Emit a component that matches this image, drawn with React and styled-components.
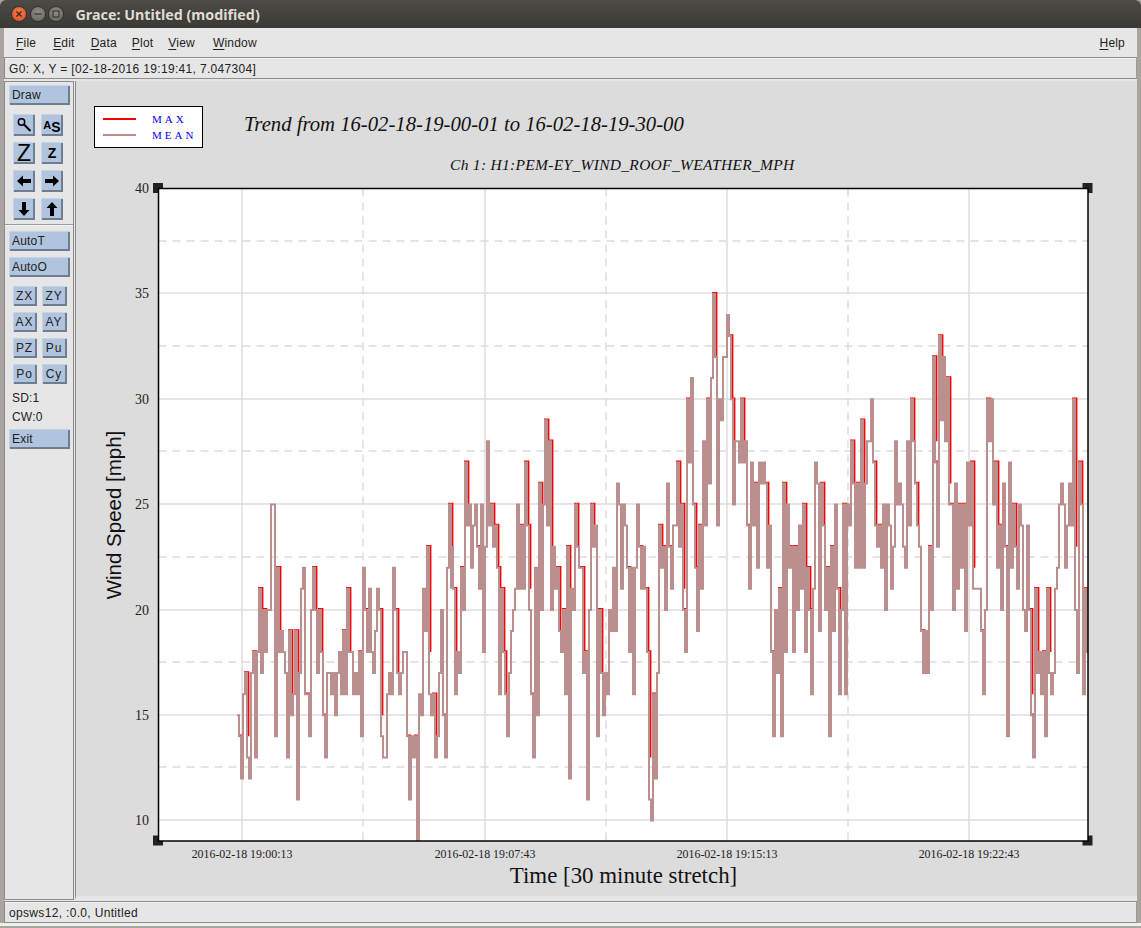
import styled, { createGlobalStyle } from 'styled-components';

const GlobalStyle = createGlobalStyle`
  html, body {
    margin: 0;
    padding: 0;
    background: #a8a59f;
    overflow: hidden;
  }
  * {
    box-sizing: border-box;
  }
`;

const Window = styled.div`
  width: 1141px;
  height: 928px;
  display: flex;
  flex-direction: column;
  background: #a8a59f;
  font-family: 'Liberation Sans', Arial, sans-serif;
  font-size: 12px;
  color: #222;
`;

const TitleBar = styled.div`
  height: 28px;
  flex: none;
  display: flex;
  align-items: center;
  padding-left: 11px;
  background: linear-gradient(#4c4b46, #3a3935);
  border-radius: 6px 6px 0 0;
`;

const WinButton = styled.div`
  width: 16px;
  height: 16px;
  border-radius: 50%;
  margin-right: 2.5px;
  display: flex;
  align-items: center;
  justify-content: center;
  border: 1px solid #33322e;
  background: ${(props) => (props.close ? 'radial-gradient(circle at 50% 40%, #f4805a, #d9481c)' : 'radial-gradient(circle at 50% 35%, #8d8b84, #66645e)')};
`;

const TitleText = styled.div`
  margin-left: 9px;
  font-family: 'Noto Sans', sans-serif;
  font-weight: 700;
  font-size: 14.3px;
  color: #dfdbd2;
`;

const Frame = styled.div`
  flex: 1;
  display: flex;
  flex-direction: column;
  margin: 0 4px;
  min-height: 0;
  background: #e6e6e6;
`;

const MenuBar = styled.div`
  height: 29px;
  flex: none;
  display: flex;
  align-items: center;
  padding-left: 12px;
  padding-right: 12px;
`;

const MenuItem = styled.div`
  margin-right: ${(props) => props.gap}px;
  margin-left: ${(props) => (props.right ? 'auto' : '0')};
  letter-spacing: 0.2px;
  u {
    text-underline-offset: 2px;
  }
`;

const Field = styled.div`
  height: ${(props) => props.height}px;
  flex: none;
  display: flex;
  align-items: center;
  padding: 1px 0 0 4px;
  letter-spacing: 0.33px;
  border: 1px solid #8c8c8c;
  border-right-color: #9a9a9a;
  box-shadow: inset 0 1px 0 #f4f4f4;
`;

const Body = styled.div`
  flex: 1;
  min-height: 0;
  display: flex;
  padding: 2px 0 1px;
`;

const Side = styled.div`
  width: 70px;
  flex: none;
  border: 1px solid #8c8c8c;
  padding: 3px 2px 0 4px;
  display: flex;
  flex-direction: column;
`;

const WideButton = styled.div`
  width: 61px;
  height: 20px;
  flex: none;
  display: flex;
  align-items: center;
  padding-left: 3px;
  margin-top: ${(props) => props.top ?? 0}px;
  margin-bottom: ${(props) => props.bottom ?? 6}px;
  background: #b0c4de;
  box-shadow: inset 1px 1px 0 #c4d3e6, inset -2px -2px 0 #6e7d90;
  letter-spacing: 0.2px;
`;

const IconGrid = styled.div`
  display: grid;
  grid-template-columns: 22px 22px;
  grid-auto-rows: 22px;
  gap: 6px;
  padding: 9px 0 0 4px;
`;

const IconButton = styled.div`
  display: flex;
  align-items: center;
  justify-content: center;
  background: #b0c4de;
  box-shadow: inset 1px 1px 0 #c4d3e6, inset -2px -2px 0 #6e7d90;
  color: #000;
  font-weight: ${(props) => (props.thin ? 400 : 700)};
  font-size: ${(props) => props.size ?? 12}px;
  line-height: 1;
`;

const TallLetter = styled.span`
  font-size: 14px;
  margin-top: 3px;
`;

const Divider = styled.div`
  height: 2px;
  margin: 4px -2px 5px -4px;
  background: #9a9a9a;
  border-bottom: 1px solid #f4f4f4;
`;

const SmallGrid = styled.div`
  display: grid;
  grid-template-columns: 24px 25px;
  grid-auto-rows: 20px;
  column-gap: 5px;
  row-gap: 6px;
  padding: 6px 0 0 4px;
`;

const SmallButton = styled.div`
  display: flex;
  align-items: center;
  justify-content: center;
  padding-right: 1px;
  background: #b0c4de;
  box-shadow: inset 1px 1px 0 #c4d3e6, inset -2px -2px 0 #6e7d90;
  letter-spacing: 0.9px;
`;

const Info = styled.div`
  height: ${(props) => props.height}px;
  margin-top: ${(props) => props.top ?? 0}px;
  display: flex;
  align-items: center;
  padding-left: 3px;
  letter-spacing: 0.2px;
`;

const Canvas = styled.div`
  flex: 1;
  margin-left: 1px;
  min-width: 0;
  border-left: 1px solid #8c8c8c;
  border-bottom: 4px solid #e6e6e6;
  background: #dcdcdc;
`;

const BottomStrip = styled.div`
  height: 5px;
  flex: none;
  margin: 0 -4px;
  background: #f0f0ee;
  border-bottom: 2px solid #a8a59f;
`;

const Plot = styled.svg`
  display: block;
  width: 100%;
  height: 100%;
`;

const X0 = 158.5;
const X1 = 1088;
const Y0 = 188.5;
const Y1 = 841;
const yOf = (v) => 188.5 + (40 - v) * 21.07;

const segs = [
  {
    x: 239,
    v: [14, 12, 16, 17, 13, 12, 17, 18, 13, 18, 21, 17, 20, 18, 20, 20, 25, 25, 14, 22, 18, 19, 18, 17, 13, 19, 15, 16, 19, 11, 17, 21, 22, 16, 16, 14, 20, 22, 20, 17, 20, 18, 15, 13, 17, 17, 16, 17, 15, 17, 18, 16, 19, 16, 21, 18, 18, 16, 17, 16, 18, 14, 22, 20, 18, 21, 18, 17, 19, 21, 20, 14, 13, 13, 16, 17, 16, 22, 20, 17, 16, 17, 18, 18, 14, 11, 14, 13, 14, 9, 16, 15, 21, 19, 23, 16, 15, 16, 13, 14, 17, 20, 15, 13, 22, 25, 21],
  },
  {
    x: 451,
    v: [23, 21, 16, 18, 17, 22, 20, 27, 24, 25, 22, 24, 25, 23, 21, 25, 18, 23, 28, 24, 25, 23, 24, 22, 16, 21, 18, 16, 14, 17, 19, 20, 21, 25, 21, 24, 21, 27, 24, 20, 16, 13, 22, 15, 26, 20, 25, 29, 24, 28, 20, 23, 21, 22, 19, 18, 20, 16, 23, 12, 21, 20, 25, 23, 22, 22, 17, 18, 11, 20, 25, 23, 24, 14, 20, 17, 15, 17, 16, 20, 19, 22, 19, 26, 25, 21, 25, 24, 22, 18, 22, 16, 22, 25, 23, 21, 23, 21, 18, 11, 10, 16, 12, 17, 24, 22, 23, 20],
  },
  {
    x: 667,
    v: [26, 23, 21, 24, 24, 27, 23, 25, 20, 18, 30, 27, 31, 25, 22, 19, 24, 21, 28, 24, 30, 26, 31, 35, 32, 24, 30, 29, 32, 32, 34, 33, 30, 25, 28, 28, 27, 30, 27, 28, 24, 21, 27, 24, 26, 22, 27, 26, 27, 26, 22, 24, 18, 14, 20, 17, 21, 14, 26, 18, 25, 22, 23, 18, 23, 20, 24, 21, 25, 18, 22, 20, 16, 21, 27, 26, 19, 26, 24, 20, 22, 14, 23, 19, 25, 21, 16, 20, 25, 16, 25, 24, 28, 26, 22, 26, 22, 29, 22, 26, 28, 28, 30, 27, 24, 23, 24],
  },
  {
    x: 881,
    v: [22, 25, 20, 25, 24, 21, 23, 28, 25, 26, 25, 23, 22, 28, 24, 30, 28, 26, 24, 23, 19, 17, 19, 17, 23, 20, 32, 27, 23, 33, 29, 32, 28, 31, 25, 25, 20, 26, 21, 25, 22, 25, 19, 27, 24, 27, 21, 21, 21, 21, 19, 16, 20, 30, 28, 30, 25, 27, 22, 24, 20, 26, 23, 14, 27, 22, 25, 23, 21, 25, 24, 20, 19, 24, 20, 15, 13, 21, 17, 18, 16, 18, 14, 21, 17, 16, 17, 21, 22, 25, 26, 25, 22, 24, 26, 24, 30, 20, 17, 27, 25, 16, 21, 18, 23],
  },
];

const points = [{ x: 237, v: 15 }];
segs.forEach((seg) => {
  seg.v.forEach((v, i) => points.push({ x: seg.x + i * 2, v }));
});

const meanPath = points.reduce((d, p, i) => {
  const y = yOf(p.v).toFixed(1);
  if (i === 0) return `M${p.x},${y}`;
  return `${d}H${p.x}V${y}`;
}, '');

// max trace only peeks out on the right of some falling edges
const maxPath = points.reduce((d, p, i) => {
  const next = points[i + 1];
  if (!next || i % 3 === 0 || next.v > p.v - 2) return d;
  const top = yOf(p.v) - 1;
  const bottom = yOf(p.v - Math.ceil((p.v - next.v) * 0.7));
  return `${d}M${p.x - 1},${top.toFixed(1)}H${next.x + 1.6}V${bottom.toFixed(1)}`;
}, '');

const yTicks = [
  { v: 40, y: 188 },
  { v: 35, y: 293 },
  { v: 30, y: 399 },
  { v: 25, y: 504 },
  { v: 20, y: 610 },
  { v: 15, y: 715 },
  { v: 10, y: 820 },
];
const yMinor = [241, 346, 451, 557, 662, 767];
const xMajor = [
  { x: 242, label: '2016-02-18 19:00:13' },
  { x: 485, label: '2016-02-18 19:07:43' },
  { x: 727, label: '2016-02-18 19:15:13' },
  { x: 969, label: '2016-02-18 19:22:43' },
];
const xMinor = [363, 606, 848];
const handles = [
  [X0, Y0],
  [X1, Y0],
  [X0, Y1],
  [X1, Y1],
];

function ArrowIcon({ rotate }) {
  return (
    <svg width="14" height="14" viewBox="0 0 14 14" style={{ transform: `rotate(${rotate}deg)` }}>
      <path d="M0 7L6 1.5V5H14V9H6V12.5Z" fill="#000" />
    </svg>
  );
}

function WinGlyph({ kind }) {
  if (kind === 'close') {
    return (
      <svg width="8" height="8" viewBox="0 0 8 8">
        <path d="M1.5 1.5L6.5 6.5M6.5 1.5L1.5 6.5" stroke="#4a2012" strokeWidth="1.4" />
      </svg>
    );
  }
  if (kind === 'min') {
    return (
      <svg width="8" height="8" viewBox="0 0 8 8">
        <path d="M0.5 4H7.5" stroke="#3c3b37" strokeWidth="1.4" />
      </svg>
    );
  }
  return (
    <svg width="8" height="8" viewBox="0 0 8 8">
      <rect x="1" y="1" width="6" height="6" fill="none" stroke="#3c3b37" strokeWidth="1.2" />
    </svg>
  );
}

function PlotCanvas() {
  return (
    <Plot viewBox="76 81 1061 815" preserveAspectRatio="xMinYMin meet">
      <rect x="94.5" y="106.5" width="108" height="41" fill="#fff" stroke="#000" />
      <line x1="103" x2="136" y1="119" y2="119" stroke="#f00" strokeWidth="2" />
      <line x1="103" x2="136" y1="135" y2="135" stroke="#bc8f8f" strokeWidth="2" />
      <g fontFamily="'Liberation Serif', serif" fontSize="11" fill="#00f" letterSpacing="3">
        <text x="152" y="123">MAX</text>
        <text x="152" y="139">MEAN</text>
      </g>
      <text x="244" y="131" fontFamily="'Liberation Serif', serif" fontStyle="italic" fontSize="20.7" fill="#111">
        Trend from 16-02-18-19-00-01 to 16-02-18-19-30-00
      </text>
      <text x="450" y="170" fontFamily="'Liberation Serif', serif" fontStyle="italic" fontSize="15.5" letterSpacing="0.3" fill="#111">
        Ch 1: H1:PEM-EY_WIND_ROOF_WEATHER_MPH
      </text>

      {handles.map(([x, y]) => (
        <rect key={`${x}-${y}`} x={x - 5.5} y={y - 5.5} width="10" height="10" fill="#222" />
      ))}
      <rect x={X0} y={Y0} width={X1 - X0} height={Y1 - Y0} fill="#fff" />

      <g stroke="#dcdcdc" strokeWidth="1.4">
        {yTicks.slice(1).map((t) => (
          <line key={t.v} x1={X0} x2={X1} y1={t.y} y2={t.y} />
        ))}
        {xMajor.map((t) => (
          <line key={t.x} x1={t.x} x2={t.x} y1={Y0} y2={Y1} />
        ))}
      </g>
      <g stroke="#dcdcdc" strokeWidth="1.4" strokeDasharray="8 6">
        {yMinor.map((y) => (
          <line key={y} x1={X0} x2={X1} y1={y} y2={y} />
        ))}
        {xMinor.map((x) => (
          <line key={x} x1={x} x2={x} y1={Y0} y2={Y1} />
        ))}
      </g>

      <clipPath id="plot-area">
        <rect x={X0} y={Y0} width={X1 - X0} height={Y1 - Y0} />
      </clipPath>
      <g clipPath="url(#plot-area)" fill="none">
        <path d={maxPath} stroke="#f00" strokeWidth="1.6" />
        <path d={meanPath} stroke="#bc8f8f" strokeWidth="2" />
      </g>

      <rect x={X0} y={Y0} width={X1 - X0} height={Y1 - Y0} fill="none" stroke="#000" strokeWidth="1.5" />

      <g fontFamily="'Liberation Serif', serif" fontSize="14" fill="#222" textAnchor="end">
        {yTicks.map((t) => (
          <text key={t.v} x="149" y={t.y + 5}>{t.v}</text>
        ))}
      </g>
      <g fontFamily="'Liberation Serif', serif" fontSize="11.9" fill="#222" textAnchor="middle">
        {xMajor.map((t) => (
          <text key={t.x} x={t.x} y="858">{t.label}</text>
        ))}
      </g>
      <text x="623.5" y="883" textAnchor="middle" fontFamily="'Liberation Serif', serif" fontSize="22.9" fill="#111">
        Time [30 minute stretch]
      </text>
      <text
        transform="translate(121,515) rotate(-90)"
        textAnchor="middle"
        fontFamily="'Liberation Sans', sans-serif"
        fontSize="20.5"
        fill="#111"
      >
        Wind Speed [mph]
      </text>
    </Plot>
  );
}

export default function App() {
  const menus = [
    { label: 'File', gap: 17 },
    { label: 'Edit', gap: 16 },
    { label: 'Data', gap: 15 },
    { label: 'Plot', gap: 15 },
    { label: 'View', gap: 18 },
    { label: 'Window', gap: 0 },
  ];
  const smalls = ['ZX', 'ZY', 'AX', 'AY', 'PZ', 'Pu', 'Po', 'Cy'];

  return (
    <Window>
      <GlobalStyle />
      <TitleBar>
        <WinButton close>
          <WinGlyph kind="close" />
        </WinButton>
        <WinButton>
          <WinGlyph kind="min" />
        </WinButton>
        <WinButton>
          <WinGlyph kind="max" />
        </WinButton>
        <TitleText>Grace: Untitled (modified)</TitleText>
      </TitleBar>
      <Frame>
        <MenuBar>
          {menus.map((m) => (
            <MenuItem key={m.label} gap={m.gap}>
              <u>{m.label[0]}</u>
              {m.label.slice(1)}
            </MenuItem>
          ))}
          <MenuItem right gap={0}>
            <u>H</u>elp
          </MenuItem>
        </MenuBar>
        <Field height={22}>G0: X, Y = [02-18-2016 19:19:41, 7.047304]</Field>
        <Body>
          <Side>
            <WideButton bottom={0}>Draw</WideButton>
            <IconGrid>
              <IconButton>
                <svg width="16" height="16" viewBox="0 0 16 16">
                  <circle cx="5.5" cy="5" r="3.2" fill="none" stroke="#000" strokeWidth="1.5" />
                  <path d="M8 7.5L14.5 14" stroke="#000" strokeWidth="2" />
                </svg>
              </IconButton>
              <IconButton size={11}>
                A<TallLetter>S</TallLetter>
              </IconButton>
              <IconButton size={23} thin>Z</IconButton>
              <IconButton size={14}>Z</IconButton>
              <IconButton>
                <ArrowIcon rotate={0} />
              </IconButton>
              <IconButton>
                <ArrowIcon rotate={180} />
              </IconButton>
              <IconButton>
                <ArrowIcon rotate={270} />
              </IconButton>
              <IconButton>
                <ArrowIcon rotate={90} />
              </IconButton>
            </IconGrid>
            <Divider />
            <WideButton>AutoT</WideButton>
            <WideButton bottom={3}>AutoO</WideButton>
            <SmallGrid>
              {smalls.map((s) => (
                <SmallButton key={s}>{s}</SmallButton>
              ))}
            </SmallGrid>
            <Info height={18} top={5}>SD:1</Info>
            <Info height={19}>CW:0</Info>
            <WideButton top={3}>Exit</WideButton>
          </Side>
          <Canvas>
            <PlotCanvas />
          </Canvas>
        </Body>
        <Field height={22}>opsws12, :0.0, Untitled</Field>
      </Frame>
      <BottomStrip />
    </Window>
  );
}
